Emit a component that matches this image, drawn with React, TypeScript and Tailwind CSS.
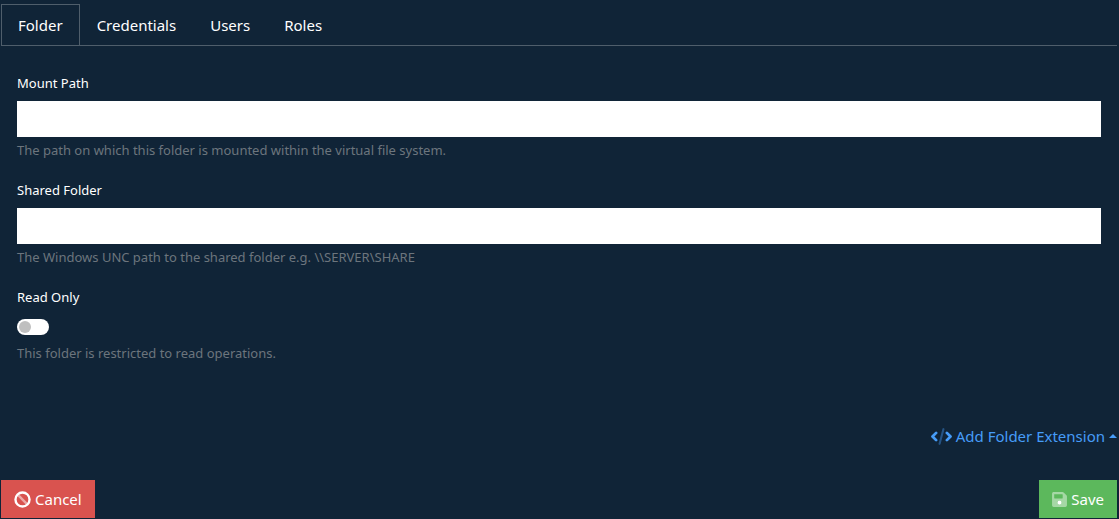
import { useState } from "react";
import clsx from "clsx";

const TABS = ["Folder", "Credentials", "Users", "Roles"];

interface TextFieldProps {
  id: string;
  label: string;
  help: string;
}

function BanIcon() {
  return (
    <svg viewBox="0 0 512 512" className="h-[17px] w-[17px] shrink-0" fill="none" stroke="currentColor" aria-hidden="true">
      <path d="M125 125L387 387" strokeWidth="72" opacity="0.5" />
      <circle cx="256" cy="256" r="212" strokeWidth="72" />
    </svg>
  );
}

function SaveIcon() {
  return (
    <svg viewBox="0 0 448 512" className="h-[17px] w-[15px] shrink-0" fill="currentColor" aria-hidden="true">
      <path
        opacity="0.45"
        d="M433.941 129.941l-83.882-83.882A48 48 0 0 0 316.118 32H48C21.49 32 0 53.49 0 80v352c0 26.51 21.49 48 48 48h352c26.51 0 48-21.49 48-48V163.882a48 48 0 0 0-14.059-33.941zM224 416c-35.346 0-64-28.654-64-64 0-35.346 28.654-64 64-64s64 28.654 64 64c0 35.346-28.654 64-64 64zm96-304.52V212c0 6.627-5.373 12-12 12H76c-6.627 0-12-5.373-12-12V108c0-6.627 5.373-12 12-12h228.52c3.183 0 6.235 1.264 8.485 3.515l3.48 3.48A11.996 11.996 0 0 1 320 111.48z"
      />
      <circle cx="224" cy="352" r="64" />
    </svg>
  );
}

function CodeIcon() {
  return (
    <svg viewBox="0 0 640 512" className="h-[17px] w-[21px] shrink-0" fill="none" stroke="currentColor" aria-hidden="true">
      <path d="M378 32L262 480" strokeWidth="64" strokeLinecap="round" opacity="0.4" />
      <path
        d="M156 146L46 256l110 110M484 146l110 110-110 110"
        strokeWidth="84"
        strokeLinecap="round"
        strokeLinejoin="round"
      />
    </svg>
  );
}

function TextField({ id, label, help }: TextFieldProps) {
  const [value, setValue] = useState("");

  return (
    <div>
      <label htmlFor={id} className="block leading-5">
        {label}
      </label>
      <input
        id={id}
        type="text"
        value={value}
        onChange={(e) => setValue(e.target.value)}
        aria-describedby={`${id}-help`}
        className="mt-2 block h-9 w-full bg-white px-3 text-[#495057]"
      />
      <p id={`${id}-help`} className="mt-[3px] leading-5 text-[#6c757d]">
        {help}
      </p>
    </div>
  );
}

export default function App() {
  const [activeTab, setActiveTab] = useState("Folder");
  const [readOnly, setReadOnly] = useState(false);

  return (
    <div className="min-h-screen bg-[#102437] pt-1 pr-0.5 pl-px font-['Noto_Sans',sans-serif] text-[15px] text-white">
      {/* Tabs */}
      <nav role="tablist" className="flex border-b border-[#4f5e6b]">
        {TABS.map((tab) => (
          <button
            key={tab}
            type="button"
            role="tab"
            aria-selected={tab === activeTab}
            onClick={() => setActiveTab(tab)}
            className={clsx(
              "border border-b-0 px-4 pt-2 pb-2 leading-6",
              tab === activeTab ? "border-[#4f5e6b]" : "border-transparent"
            )}
          >
            {tab}
          </button>
        ))}
      </nav>

      {/* Folder settings */}
      <div className="flex flex-col gap-5 px-4 pt-[27px] text-[13px]">
        <TextField
          id="mount-path"
          label="Mount Path"
          help="The path on which this folder is mounted within the virtual file system."
        />
        <TextField
          id="shared-folder"
          label="Shared Folder"
          help="The Windows UNC path to the shared folder e.g. \\SERVER\SHARE"
        />
        <div>
          <label htmlFor="read-only" className="block leading-5">
            Read Only
          </label>
          <input
            id="read-only"
            type="checkbox"
            role="switch"
            checked={readOnly}
            onChange={(e) => setReadOnly(e.target.checked)}
            aria-describedby="read-only-help"
            className="mt-3 flex h-4 w-8 appearance-none items-center rounded-full bg-white px-0.5 before:h-3 before:w-3 before:rounded-full before:bg-[#bfbfbf] checked:justify-end checked:before:bg-[#5cb85c]"
          />
          <p id="read-only-help" className="mt-2 leading-5 text-[#6c757d]">
            This folder is restricted to read operations.
          </p>
        </div>
      </div>

      {/* Extension menu */}
      <div className="mt-[61px] flex justify-end">
        <button type="button" aria-haspopup="menu" className="flex items-center gap-1 leading-6 text-[#469cf8]">
          <CodeIcon />
          Add Folder Extension
          <svg viewBox="0 0 8 4" className="h-1 w-2" fill="currentColor" aria-hidden="true">
            <path d="M0 4L4 0l4 4z" />
          </svg>
        </button>
      </div>

      {/* Actions */}
      <div className="mt-8 flex justify-between">
        <button type="button" className="flex items-center gap-1 border border-[#d9534f] bg-[#d9534f] px-3 py-1.5 leading-6">
          <BanIcon />
          Cancel
        </button>
        <button type="button" className="flex items-center gap-1 border border-[#5cb85c] bg-[#5cb85c] px-3 py-1.5 leading-6">
          <SaveIcon />
          Save
        </button>
      </div>
    </div>
  );
}
